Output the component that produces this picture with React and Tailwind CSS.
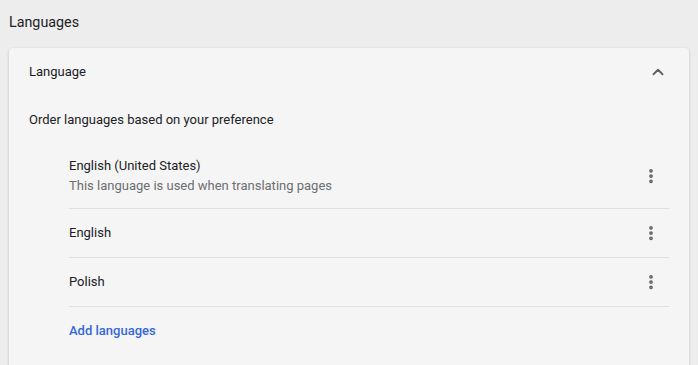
import { ChevronUp, MoreVertical } from "lucide-react";

const languages = [
  { name: "English (United States)", note: "This language is used when translating pages" },
  { name: "English" },
  { name: "Polish" },
];

function LanguageRow({ name, note }) {
  return (
    <div
      className={`flex items-center justify-between border-b border-[#e0e0e0] pr-[9px] ${
        note ? "h-[65px]" : "h-[49px]"
      }`}
    >
      <div className="flex flex-col">
        <span className="text-[13px] leading-[20px] text-[#202124]">{name}</span>
        {note && (
          <span className="text-[13px] leading-[20px] text-[#6b6e72]">{note}</span>
        )}
      </div>
      <MoreVertical size={18} strokeWidth={3} className="text-[#5f6368]" />
    </div>
  );
}

export default function App() {
  return (
    <div
      className="h-[365px] w-full overflow-hidden bg-[#ededed] pl-[9px] pr-[9px]"
      style={{ fontFamily: "Roboto, 'Noto Sans', sans-serif" }}
    >
      <h2 className="flex h-[42px] items-center pt-[3px] text-[14.3px] font-normal text-[#202124]">
        Languages
      </h2>

      <div className="mt-[6px] rounded-t-[4px] bg-[#f5f5f5] shadow-[0_1px_3px_rgba(0,0,0,0.2)]">
        <div className="flex h-[48px] items-center justify-between pl-[20px] pr-[22px]">
          <span className="text-[13px] text-[#202124]">Language</span>
          <ChevronUp size={18} strokeWidth={2.5} className="text-[#5f6368]" />
        </div>

        <div className="flex h-[48px] items-center pl-[20px]">
          <span className="text-[13px] text-[#202124]">
            Order languages based on your preference
          </span>
        </div>

        <div className="ml-[60px] mr-[20px]">
          {languages.map((lang) => (
            <LanguageRow key={lang.name} {...lang} />
          ))}
          <div className="flex h-[48px] items-center">
            <button className="text-[13px] font-medium text-[#3367d6]">Add languages</button>
          </div>
        </div>
        <div className="h-[20px]" />
      </div>
    </div>
  );
}
